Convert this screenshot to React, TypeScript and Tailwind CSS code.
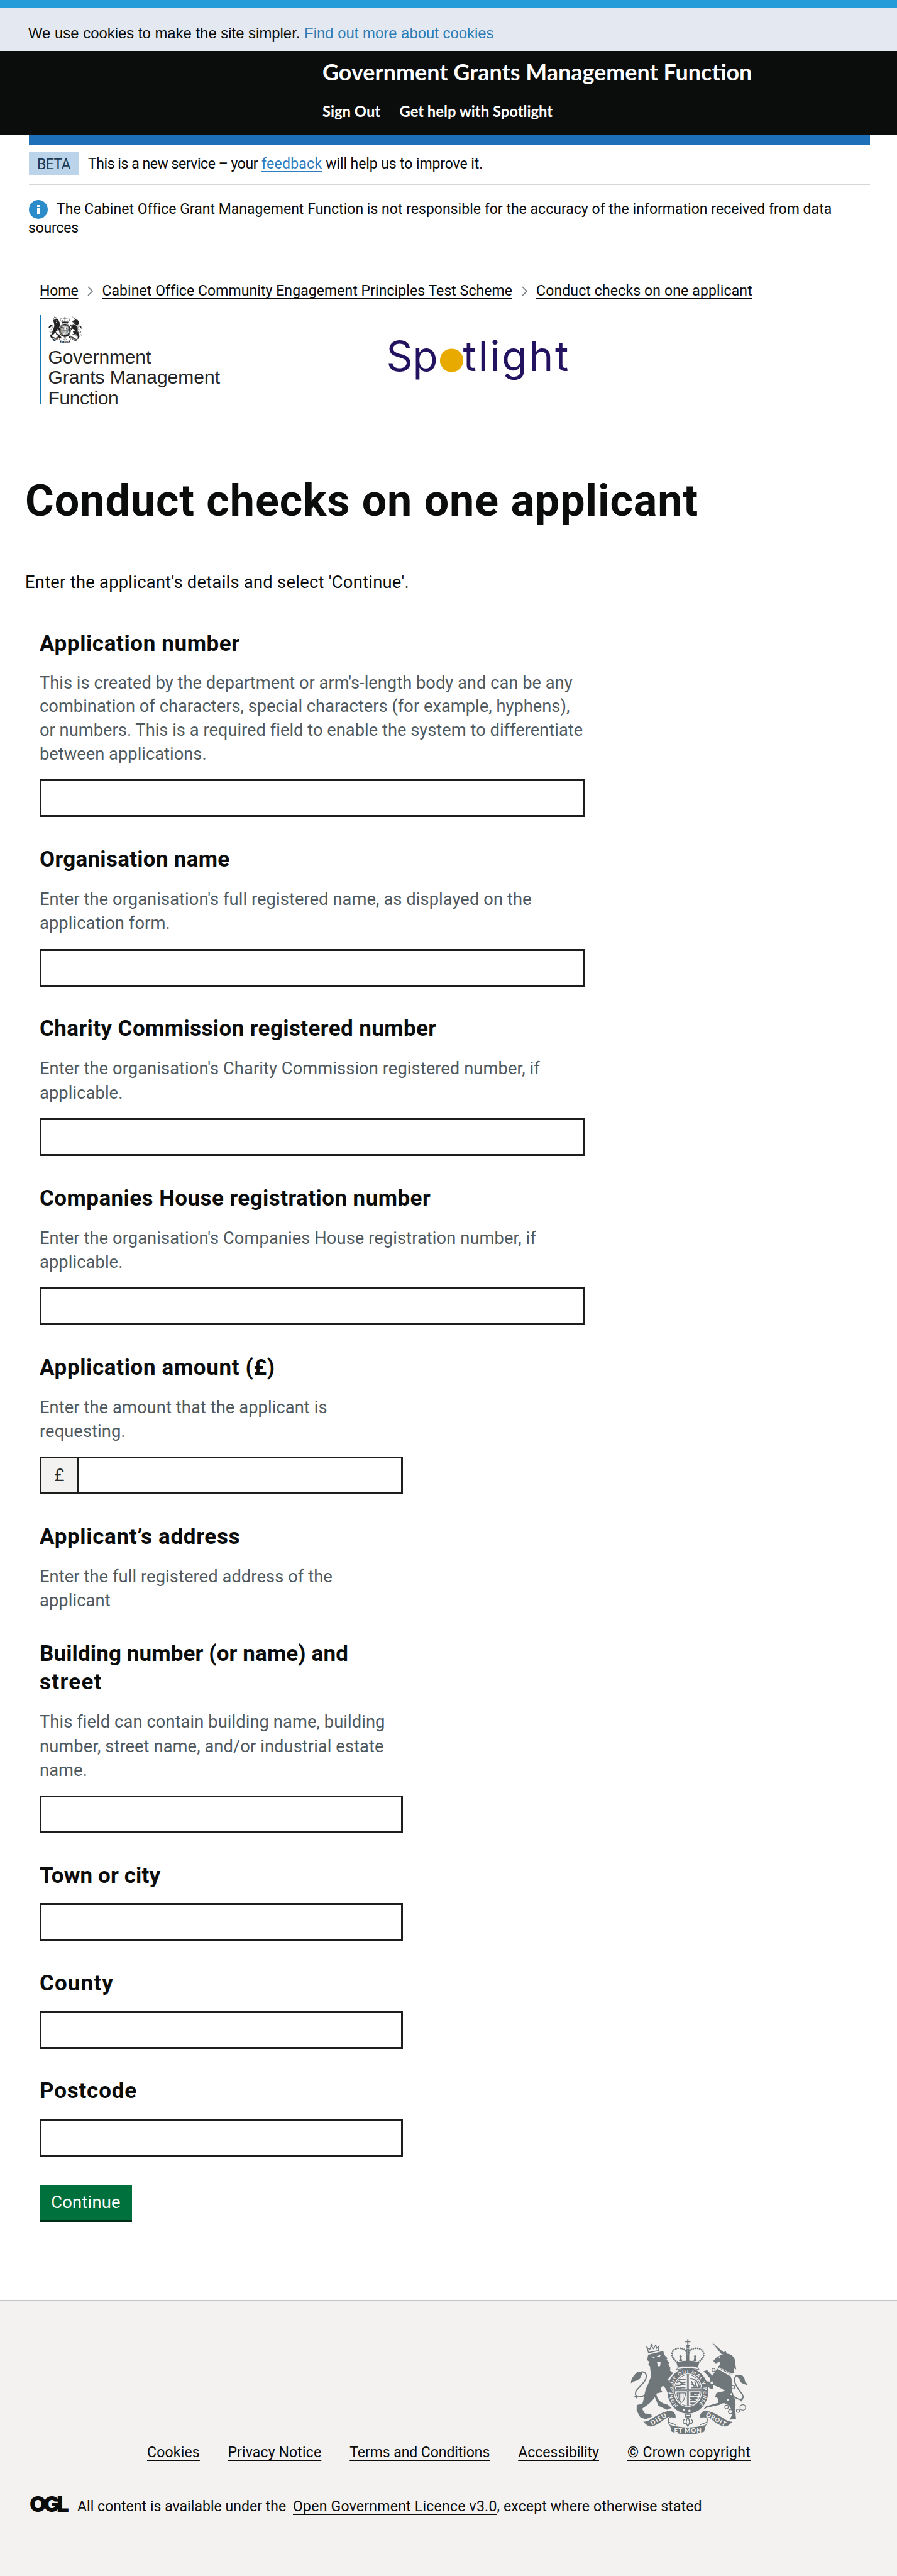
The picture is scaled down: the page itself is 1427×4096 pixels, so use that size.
import React from 'react';

const LION =
  'M163 130 L240 110 L246 132 L262 148 L257 155 L272 172 L266 180 L276 196 L274 210 L290 222 L262 255 L292 288 L275 296 L290 325 L258 318 L250 300 L238 287 C226 295 222 310 240 318 L206 326 C208 355 230 375 262 380 L282 398 L258 408 L215 388 L197 345 C178 375 150 390 135 402 L148 424 L180 428 L184 442 L152 455 L125 446 L106 412 L107 382 L135 375 C145 340 148 300 160 285 L177 240 C180 215 170 205 174 190 L164 182 L168 165 L158 158 Z';
const UNICORN_HEAD =
  'M538 128 L548 109 L557 125 C586 127 600 150 598 172 L603 205 L590 198 L594 222 L582 226 L512 190 C526 180 530 168 514 166 L502 177 L489 162 L508 140 Z';
const UNICORN_BODY =
  'M508 200 L576 240 C588 270 578 290 583 320 C600 350 602 380 598 405 L602 452 L570 457 L584 430 L576 400 C560 372 535 368 520 382 L458 396 L438 406 L452 390 L512 372 L514 352 L498 340 L505 322 L546 312 C520 290 500 290 486 280 L490 305 L470 298 L447 262 L470 266 L474 250 L440 214 L458 208 L484 236 Z';
const RIBBON =
  'M140 466 C170 470 200 428 262 413 C288 408 304 425 301 446 L268 442 C250 446 215 486 180 491 C165 491 150 478 140 466 Z';

function RoyalArms({ ink, paper, className, id }: { ink: string; paper: string; className: string; id: string }) {
  const half = (
    <>
      <path d={RIBBON} fill={ink} />
      <path d="M300 448 C280 435 262 445 265 462 C268 478 290 472 302 484 M268 445 C262 480 270 482 276 486" fill="none" stroke={ink} strokeWidth="4" />
      <path d="M310 166 C268 142 278 98 318 98 C342 98 354 108 356 122" fill="none" stroke={ink} strokeWidth="9" strokeLinecap="round" strokeDasharray="0.1 10.5" />
      <path d="M318 162 L323 144 L317 140 L326 132 L334 140 L329 145 L334 162 Z" fill={ink} />
    </>
  );
  return (
    <svg viewBox="76 48 586 486" className={className} preserveAspectRatio="none" aria-hidden="true">
      {half}
      <g transform="translate(724 0) scale(-1 1)">{half}</g>
      {/* crown */}
      <path d="M304 168 C340 157 384 157 420 168 L412 194 C380 184 344 184 312 194 Z" fill={ink} />
      <path d="M355 100 h14 v62 h-14 Z M359 52 h6 v9 h10 v7 h-10 v12 h6 v6 h-18 v-6 h6 v-12 h-10 v-7 h10 Z" fill={ink} />
      <path d="M362 104 v30" stroke={paper} strokeWidth="3" />
      <circle cx="362" cy="91" r="7" fill={ink} />
      {/* garter */}
      <path d="M312 194 C345 186 380 186 412 194 L418 206 C380 198 345 198 306 206 Z" fill={paper} stroke={ink} strokeWidth="3" />
      <ellipse cx="362" cy="312" rx="102" ry="115" fill={ink} />
      <ellipse cx="362" cy="309" rx="72" ry="84" fill={paper} />
      <ellipse cx="362" cy="309" rx="66" ry="78" fill="none" stroke={ink} strokeWidth="3" />
      <path d="M362 228 V390 M294 309 H430" stroke={ink} strokeWidth="9" />
      <path d="M362 228 V390 M294 309 H430" stroke={paper} strokeWidth="2.5" />
      <path
        d="M315 256 h36 M306 270 l14 -6 l10 8 l20 -4 M304 284 h18 l8 -5 h20 M302 296 l20 3 l10 -4 h18 M375 322 h44 M375 334 l12 -4 l10 6 l18 -4 M374 348 h36 M374 361 l14 -4 l16 3 M374 374 h22"
        fill="none"
        stroke={ink}
        strokeWidth="7"
      />
      <path d="M374 250 C400 250 418 272 418 296 H378 M380 264 l14 26 M396 264 l8 24 l-24 -8" fill="none" stroke={ink} strokeWidth="6" />
      <path d="M308 322 h42 C350 350 335 372 328 370 C312 355 308 340 308 322 M318 324 v34 M328 324 v42 M338 324 v30" fill="none" stroke={ink} strokeWidth="4" />
      <path id={id} d="M316 388 A78 91 0 1 1 408 388" fill="none" />
      <text fill={paper} className="font-[Lato] text-[24px] font-bold">
        <textPath href={'#' + id} startOffset="4" textLength="412">
          HONI SOIT QUI MAL Y PENSE
        </textPath>
      </text>
      <circle cx="342" cy="408" r="6" fill={paper} />
      <circle cx="370" cy="412" r="6" fill={paper} />
      {/* lion */}
      <path d={LION} fill={ink} stroke={paper} strokeWidth="2" />
      <path d="M180 138 l18 4 l-6 6 Z M206 138 l20 -6 l-4 10 Z M208 168 q10 -6 18 0 l-2 18 q-6 6 -12 0 Z" fill={paper} />
      <path d="M166 120 L158 94 L172 104 L180 86 L190 100 L202 82 L206 98 L218 88 L216 110 Z" fill="none" stroke={ink} strokeWidth="5" />
      <path d="M181 76 v14 M175 82 h14" stroke={ink} strokeWidth="4" />
      <path d="M152 330 C120 350 92 345 104 312 C124 285 160 262 154 232 C148 212 128 214 118 224" fill="none" stroke={ink} strokeWidth="6" />
      <path d="M78 274 C80 245 92 238 104 222 C115 214 130 214 134 220 C132 250 110 262 92 264 Z M90 335 l20 4 l-2 12 Z" fill={ink} />
      {/* unicorn */}
      <path d="M478 64 L546 124 L532 130 Z" fill={ink} />
      <path d={UNICORN_HEAD} fill={ink} />
      <path d={UNICORN_BODY} fill={ink} />
      <path d="M514 194 L578 230" stroke={ink} strokeWidth="5" strokeDasharray="5 3" />
      <circle cx="520" cy="142" r="4" fill={paper} />
      <path d="M585 335 C620 365 648 355 634 330 C612 300 590 275 596 248 C600 230 620 232 628 240" fill="none" stroke={ink} strokeWidth="6" />
      <path d="M602 236 C625 222 648 240 646 262 L662 284 C640 276 618 272 620 252 Z M640 350 l-22 6 l10 10 Z" fill={ink} />
      <g fill={paper} stroke={ink} strokeWidth="4">
        <circle cx="490" cy="207" r="8" />
        <circle cx="482" cy="271" r="9" />
        <circle cx="587" cy="293" r="8" />
        <circle cx="579" cy="328" r="7" />
        <circle cx="561" cy="356" r="7" />
        <circle cx="555" cy="393" r="9" />
        <circle cx="574" cy="416" r="10" />
        <circle cx="612" cy="412" r="8" />
        <circle cx="636" cy="395" r="14" />
      </g>
      {/* motto */}
      <path d="M272 483 C330 500 394 500 452 483 L443 517 C400 535 324 535 281 517 Z" fill={ink} />
      <path d="M349 430 h26 v12 h-26 Z M362 445 C372 458 372 476 362 490 C352 476 352 458 362 445 Z M356 476 C336 482 334 458 346 456 M368 476 C388 482 390 458 378 456" fill="none" stroke={ink} strokeWidth="5" />
      <g fill={paper} className="font-[Lato] text-[31px] font-black">
        <text x="294" y="522" textLength="136">ET MON</text>
        <text x="184" y="485" textLength="86" transform="rotate(-31 184 485)">DIEU</text>
        <text x="450" y="437" textLength="108" transform="rotate(29 450 437)">DROIT</text>
      </g>
    </svg>
  );
}

function Field({ label, ls, hint, children, tight }: { label: React.ReactNode; ls: string; hint?: string[]; children?: React.ReactNode; tight?: boolean }) {
  return (
    <div className={children ? 'mb-[44.8px]' : 'mb-[42.5px]'}>
      <h2 className={'text-[35px] leading-[45.5px] font-bold whitespace-nowrap ' + ls}>{label}</h2>
      {hint && (
        <p className={'mt-[21.5px] text-[27.3px] whitespace-nowrap text-[#505a5f] ' + (tight ? 'leading-[37.7px] tracking-[0.01px]' : 'leading-[38.2px] tracking-[0.08px]')}>
          {hint.map((line) => (
            <span key={line} className="block">
              {line}
            </span>
          ))}
        </p>
      )}
      {children && <div className="mt-[21px] h-[60px]">{children}</div>}
    </div>
  );
}

const Wide = () => <input className="block h-[60px] w-[867px] border-[3px] border-[#1c1d1d] bg-white px-2" />;
const Narrow = () => <input className="block h-[60px] w-[578px] border-[3px] border-[#1c1d1d] bg-white px-2" />;

const link = 'underline decoration-[2px] underline-offset-[4px] [text-decoration-skip-ink:none]';

const Chevron = () => (
  <svg viewBox="0 0 9 16" className="mx-[14.5px] h-[16px] w-[9px] shrink-0" fill="none" stroke="#6f777b" strokeWidth="1.6">
    <path d="M1 1 L8 8 L1 15" />
  </svg>
);

export default function App() {
  return (
    <div className="flex h-[4096px] w-[1427px] flex-col overflow-hidden bg-white font-[Roboto,sans-serif] text-[#0b0c0c]">
      <div className="h-[12px] shrink-0 bg-[#259cda]" />
      <div className="h-[69px] shrink-0 bg-[#e4e9f1] pt-[24px] pl-[45px] font-['Liberation_Sans',sans-serif] text-[23.9px] leading-[34px] whitespace-nowrap">
        We use cookies to make the site simpler. <a className="text-[#2e7cb5]">Find out more about cookies</a>
      </div>

      <header className="h-[134px] shrink-0 bg-[#0b0c0c] pl-[513px] font-[Lato,sans-serif] font-bold text-white">
        <div className="pt-[9.5px] text-[35.9px] leading-[48px]">Government Grants Management Function</div>
        <nav className="mt-[22px] flex gap-[30px] text-[23.8px] leading-[32px]">
          <a className="w-[92.5px] whitespace-nowrap">Sign Out</a>
          <a>Get help with Spotlight</a>
        </nav>
      </header>

      <div className="mx-[46px] w-[1338px] shrink-0">
        <div className="h-[15.5px] bg-[#1d70b8]" />
        <div className="flex h-[63px] items-center border-b-2 border-[#d5d6d8] pb-[1px] text-[23px] leading-[37px] whitespace-nowrap">
          <span className="mr-[15px] h-[37px] w-[79px] bg-[#bbd4ea] pt-[0.5px] text-center tracking-[-0.6px] text-[#1b3a55]">BETA</span>
          <span className="tracking-[-0.45px]">This is a new service – your</span>
          <a className={'mx-[6px] tracking-[0.25px] text-[#2f7dc1] ' + link}>feedback</a>
          <span className="tracking-[-0.1px]">will help us to improve it.</span>
        </div>
        <div className="mt-[24.5px] text-[23px] leading-[29.7px] whitespace-nowrap">
          <div className="flex items-center">
            <svg viewBox="0 0 30 30" className="mr-[14px] h-[30px] w-[30px]">
              <circle cx="15" cy="15" r="15" fill="#2b8cc9" />
              <path d="M13 8 h4 v3 h-4 Z M13 13 h4 v10 h-4 Z" fill="#fff" />
            </svg>
            <span className="tracking-[0.02px]">
              The Cabinet Office Grant Management Function is not responsible for the accuracy of the information received from data
            </span>
          </div>
          <div className="-ml-[1px] tracking-[-0.2px]">sources</div>
        </div>
      </div>

      <div className="ml-[63px] shrink-0">
        <nav className="mt-[69.5px] flex h-[32px] items-center text-[23px] leading-[32px] whitespace-nowrap">
          <a className={'tracking-[-0.1px] ' + link}>Home</a>
          <Chevron />
          <a className={'tracking-[0.07px] ' + link}>Cabinet Office Community Engagement Principles Test Scheme</a>
          <Chevron />
          <a className={'tracking-[0.14px] ' + link}>Conduct checks on one applicant</a>
        </nav>

        <div className="mt-[22px] flex h-[142px] items-start">
          <div className="h-[142px] border-l-[3px] border-[#0f7ab5] pl-[10.5px] font-['Liberation_Sans',sans-serif] text-[30px] leading-[32.7px] whitespace-nowrap text-[#262626]">
            <RoyalArms id="motto-small" ink="#222" paper="#fff" className="h-[45px] w-[54px]" />
            <div className="mt-[5.5px] tracking-[-0.15px]">Government</div>
            <div>Grants Management</div>
            <div className="tracking-[-0.4px]">Function</div>
          </div>
          <svg viewBox="0 0 300 90" className="mt-[28.5px] ml-[258px] h-[90px] w-[300px] overflow-visible font-[Inter,sans-serif] text-[65.5px]" fill="#221260">
            <text x="6.5" y="59.500" textLength="82">Sp</text>
            <circle cx="110.500" cy="43" r="18.600" fill="#e9aa00" />
            <text x="128.500" y="59.500" letterSpacing="2.900">tlight</text>
          </svg>
        </div>
      </div>

      <main className="shrink-0">
        <h1 className="mt-[110.3px] ml-[40px] text-[70px] leading-[84px] font-bold tracking-[0.95px] whitespace-nowrap">Conduct checks on one applicant</h1>
        <p className="mt-[69px] ml-[40px] text-[27.3px] leading-[38px] tracking-[0.28px]">Enter the applicant's details and select 'Continue'.</p>

        <form className="mt-[56.1px] ml-[63px]">
          <Field
            label="Application number"
            ls="tracking-[0.6px]"
            tight
            hint={[
              "This is created by the department or arm's-length body and can be any",
              'combination of characters, special characters (for example, hyphens),',
              'or numbers. This is a required field to enable the system to differentiate',
              'between applications.',
            ]}
          >
            <Wide />
          </Field>
          <Field label="Organisation name" ls="tracking-[0.28px]" hint={["Enter the organisation's full registered name, as displayed on the", 'application form.']}>
            <Wide />
          </Field>
          <Field
            label="Charity Commission registered number"
            ls="tracking-[0.39px]"
            hint={["Enter the organisation's Charity Commission registered number, if", 'applicable.']}
          >
            <Wide />
          </Field>
          <Field
            label="Companies House registration number"
            ls="tracking-[0.43px]"
            hint={["Enter the organisation's Companies House registration number, if", 'applicable.']}
          >
            <Wide />
          </Field>
          <Field label="Application amount (£)" ls="tracking-[0.63px]" hint={['Enter the amount that the applicant is', 'requesting.']}>
            <div className="flex w-[578px]">
              <span className="h-[60px] w-[60px] border-[3px] border-r-0 border-[#1c1d1d] bg-[#f3f2f1] text-center text-[27.3px] leading-[55px] text-[#2a2b2c]">£</span>
              <input className="block h-[60px] w-[518px] border-[3px] border-[#1c1d1d] bg-white px-2" />
            </div>
          </Field>
          <Field label="Applicant’s address" ls="tracking-[0.67px]" hint={['Enter the full registered address of the', 'applicant']} />
          <Field
            label={
              <>
                Building number (or name) and
                <br />
                <span className="tracking-[1.3px]">street</span>
              </>
            }
            ls="tracking-[0.12px]"
            hint={['This field can contain building name, building', 'number, street name, and/or industrial estate', 'name.']}
          >
            <Narrow />
          </Field>
          <Field label="Town or city" ls="tracking-[0.12px]">
            <Narrow />
          </Field>
          <Field label="County" ls="tracking-[1.1px]">
            <Narrow />
          </Field>
          <Field label="Postcode" ls="tracking-[0.8px]">
            <Narrow />
          </Field>
          <button type="button" className="block h-[59px] w-[147px] border-b-[3px] border-[#002d18] bg-[#00703c] pt-[1px] text-[27.3px] tracking-[0.25px] text-white">
            Continue
          </button>
        </form>
      </main>

      <footer className="mt-auto h-[439.5px] shrink-0 border-t-2 border-[#c4c6c8] bg-[#f3f2f1] text-[23px] whitespace-nowrap">
        <div className="ml-[1003px] pt-[59px]">
          <RoyalArms id="motto-large" ink="#6f777b" paper="#f3f2f1" className="block h-[154px] w-[187px]" />
        </div>
        <nav className="mt-[12px] ml-[234px] flex leading-[32px]">
          <a className={'mr-[44.5px] tracking-[0.2px] ' + link}>Cookies</a>
          <a className={'mr-[45px] tracking-[0.14px] ' + link}>Privacy Notice</a>
          <a className={'mr-[45px] tracking-[-0.07px] ' + link}>Terms and Conditions</a>
          <a className={'mr-[45px] ' + link}>Accessibility</a>
          <a className={'tracking-[0.33px] ' + link}>© Crown copyright</a>
        </nav>
        <div className="mt-[54px] ml-[47px] flex h-[32px] leading-[32px]">
          <span className="-mt-[3.5px] w-[76px] font-[Inter,sans-serif] text-[34.5px] font-black tracking-[-4.8px]">OGL</span>
          <span className="w-[343px] tracking-[0.04px]">All content is available under the</span>
          <a className={'tracking-[0.24px] ' + link}>Open Government Licence v3.0</a>
          <span className="tracking-[0.12px]">, except where otherwise stated</span>
        </div>
      </footer>
    </div>
  );
}
